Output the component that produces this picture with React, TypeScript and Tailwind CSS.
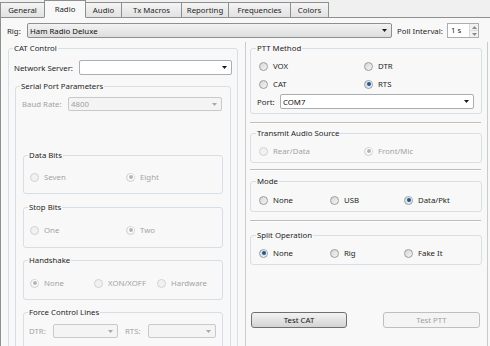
import type { ReactNode } from "react";

const tabs: [string, number][] = [
  ["General", 45],
  ["Radio", 42],
  ["Audio", 37],
  ["Tx Macros", 61],
  ["Reporting", 48],
  ["Frequencies", 63],
  ["Colors", 39],
];

const Arrow = ({ color = "#1a1a1a", up = false }: { color?: string; up?: boolean }) => (
  <svg width="5" height="3" viewBox="0 0 5 3" className="shrink-0">
    <path d={up ? "M0 3h5L2.5 0z" : "M0 0h5L2.5 3z"} fill={color} />
  </svg>
);

type ComboKind = "button" | "field" | "disabled";

const Combo = ({ text, kind, className }: { text?: string; kind: ComboKind; className: string }) => {
  const skin =
    kind === "button"
      ? "border-[#8e8f8f] bg-linear-to-b from-[#f3f3f3] to-[#dddddd] text-[#111]"
      : kind === "field"
        ? "border-[#abadb3] bg-white text-[#111]"
        : "border-[#c9c9c9] bg-[#f4f4f4] text-[#a0a0a0]";
  return (
    <div className={`flex items-center rounded-[2px] border pl-[2px] pr-[4px] ${skin} ${className}`}>
      <span className="flex-1 truncate">{text}</span>
      <Arrow color={kind === "disabled" ? "#a8a8a8" : "#1a1a1a"} />
    </div>
  );
};

const Radio = ({
  label,
  checked = false,
  disabled = false,
  className = "",
}: {
  label: string;
  checked?: boolean;
  disabled?: boolean;
  className?: string;
}) => {
  const ring = disabled
    ? "border-[#d2d2d2] bg-[#f1f1f1]"
    : "border-[#9c9c9c] bg-linear-to-br from-[#d6d6d6] to-[#f6f6f6]";
  const dot = disabled ? "bg-[#b4b4b4] ring-1 ring-white" : "bg-[#24578a] ring-1 ring-[#d8e6f2]";
  return (
    <div className={`flex h-[12px] items-center ${className}`}>
      <span className={`flex h-[9px] w-[9px] shrink-0 items-center justify-center rounded-full border ${ring}`}>
        {checked && <span className={`h-[4px] w-[4px] rounded-full ${dot}`} />}
      </span>
      <span className={`ml-[5px] ${disabled ? "text-[#a3a3a3]" : "text-[#1e1e1e]"}`}>{label}</span>
    </div>
  );
};

const Group = ({
  title,
  className = "",
  inner = "",
  legend = "ml-[4px]",
  children,
}: {
  title: string;
  className?: string;
  inner?: string;
  legend?: string;
  children?: ReactNode;
}) => (
  <fieldset className={`rounded-[3px] border border-[#d5dfe5] ${className}`}>
    <legend className={`px-[1px] leading-[10px] text-[#1e1e1e] ${legend}`}>{title}</legend>
    <div className={inner}>{children}</div>
  </fieldset>
);

const Separator = ({ className = "" }: { className?: string }) => (
  <div className={`h-[2px] w-[231px] border-y border-t-[#bdbdbd] border-b-white ${className}`} />
);

export default function App() {
  return (
    <div className="h-[346px] w-[490px] overflow-hidden bg-[#f0f0f0] font-['Noto_Sans',sans-serif] text-[7.8px] leading-[10px] text-[#1e1e1e]">
      {/* tab strip */}
      <div className="flex h-[18px] items-end border-b border-[#8e8f8f]">
        {tabs.map(([name, w], i) => {
          const active = name === "Radio";
          return (
            <div
              key={name}
              style={{ width: w }}
              className={`-mb-px flex items-center justify-center border border-[#8e8f8f] ${i > 0 ? "-ml-px" : ""} ${
                active
                  ? "relative z-10 h-[18px] border-b-[#f8f8f8] bg-[#f8f8f8]"
                  : "h-[16px] bg-linear-to-b from-[#f4f4f4] to-[#e2e2e2]"
              }`}
            >
              {name}
            </div>
          );
        })}
      </div>

      {/* pane */}
      <div className="h-[328px] border-l border-[#8e8f8f] bg-[#f8f8f8] pt-[5px]">
        <div className="flex h-[15px] items-center pl-[6px]">
          <span className="w-[20px]">Rig:</span>
          <Combo kind="button" text="Ham Radio Deluxe" className="h-[15px] w-[365px]" />
          <span className="ml-[5px] w-[50px]">Poll Interval:</span>
          <div className="flex h-[15px] w-[32px] border border-[#abadb3] bg-white">
            <span className="flex-1 pl-[3px] leading-[13px]">1 s</span>
            <div className="flex w-[9px] flex-col border-l border-[#dadada] bg-[#f2f2f2]">
              <div className="flex flex-1 items-center justify-center border-b border-[#dadada]">
                <Arrow up color="#8a8a8a" />
              </div>
              <div className="flex flex-1 items-center justify-center">
                <Arrow color="#8a8a8a" />
              </div>
            </div>
          </div>
        </div>

        <div className="mt-[4px] flex">
          {/* left column */}
          <Group title="CAT Control" className="ml-[7px] mt-[1px] h-[320px] w-[230px] shrink-0" inner="px-[5px] pt-[7px]">
            <div className="flex h-[15px] items-center">
              <span className="w-[65px]">Network Server:</span>
              <Combo kind="field" className="h-[15px] w-[153px]" />
            </div>

            <Group title="Serial Port Parameters" className="ml-[1px] mt-[6px] w-[216px]" inner="px-[6px] pt-[6px] pb-[60px]">
              <div className="flex h-[14px] items-center">
                <span className="w-[46px] text-[#a3a3a3]">Baud Rate:</span>
                <Combo kind="disabled" text="4800" className="h-[14px] w-[154px]" />
              </div>

              <Group title="Data Bits" className="ml-[1px] mt-[39px] w-[200px]" inner="pl-[6px] pt-[11px] pb-[10px]">
                <div className="flex">
                  <Radio label="Seven" disabled className="w-[96px]" />
                  <Radio label="Eight" disabled checked />
                </div>
              </Group>

              <Group title="Stop Bits" className="ml-[1px] mt-[8px] w-[200px]" inner="pl-[6px] pt-[12px] pb-[11px]">
                <div className="flex">
                  <Radio label="One" disabled className="w-[96px]" />
                  <Radio label="Two" disabled checked />
                </div>
              </Group>

              <Group title="Handshake" className="ml-[1px] mt-[7px] w-[200px]" inner="pl-[6px] pt-[12px] pb-[10px]">
                <div className="flex">
                  <Radio label="None" disabled checked className="w-[64px]" />
                  <Radio label="XON/XOFF" disabled className="w-[63px]" />
                  <Radio label="Hardware" disabled />
                </div>
              </Group>

              <Group title="Force Control Lines" className="ml-[1px] mt-[7px] w-[200px]" inner="pl-[5px] pt-[7px] pb-[10px]">
                <div className="flex h-[14px] items-center">
                  <span className="w-[24px] text-[#a3a3a3]">DTR:</span>
                  <Combo kind="disabled" className="h-[14px] w-[65px]" />
                  <span className="ml-[7px] w-[23px] text-[#a3a3a3]">RTS:</span>
                  <Combo kind="disabled" className="h-[14px] w-[68px]" />
                </div>
              </Group>
            </Group>
          </Group>

          {/* right column */}
          <div className="ml-[7px] h-[310px] w-[243px] shrink-0 border-x border-[#cbcbcb] pl-[4px]">
            <Group title="PTT Method" legend="ml-[5px]" className="mt-[1px] w-[232px]" inner="pt-[7px] pb-[4px]">
              <div className="flex pl-[8px]">
                <Radio label="VOX" className="w-[105px]" />
                <Radio label="DTR" />
              </div>
              <div className="mt-[6px] flex pl-[8px]">
                <Radio label="CAT" className="w-[105px]" />
                <Radio label="RTS" checked />
              </div>
              <div className="mt-[4px] flex h-[15px] items-center pl-[6px]">
                <span className="w-[23px]">Port:</span>
                <Combo kind="field" text="COM7" className="h-[15px] w-[194px]" />
              </div>
            </Group>

            <Separator className="mt-[8px]" />

            <Group title="Transmit Audio Source" legend="ml-[5px]" className="mt-[4px] w-[232px]" inner="pl-[8px] pt-[7px] pb-[5px]">
              <div className="flex">
                <Radio label="Rear/Data" disabled className="w-[105px]" />
                <Radio label="Front/Mic" disabled checked />
              </div>
            </Group>

            <Separator className="mt-[6px]" />

            <Group title="Mode" legend="ml-[5px]" className="mt-[5px] w-[232px]" inner="pl-[8px] pt-[8px] pb-[5px]">
              <div className="flex">
                <Radio label="None" className="w-[71px]" />
                <Radio label="USB" className="w-[74px]" />
                <Radio label="Data/Pkt" checked />
              </div>
            </Group>

            <Separator className="mt-[8px]" />

            <Group title="Split Operation" legend="ml-[5px]" className="mt-[8px] w-[232px]" inner="pl-[8px] pt-[7px] pb-[5px]">
              <div className="flex">
                <Radio label="None" checked className="w-[71px]" />
                <Radio label="Rig" className="w-[74px]" />
                <Radio label="Fake It" />
              </div>
            </Group>

            <div className="mt-[47px] flex">
              <div className="ml-[1px] flex h-[16px] w-[96px] items-center justify-center rounded-[3px] border border-[#707070] bg-linear-to-b from-[#f3f3f3] to-[#d4d4d4] text-[#111]">
                Test CAT
              </div>
              <div className="ml-[36px] flex h-[16px] w-[97px] items-center justify-center rounded-[3px] border border-[#bfbfbf] bg-[#f4f4f4] text-[#a0a0a0]">
                Test PTT
              </div>
            </div>
          </div>
        </div>
      </div>
    </div>
  );
}
